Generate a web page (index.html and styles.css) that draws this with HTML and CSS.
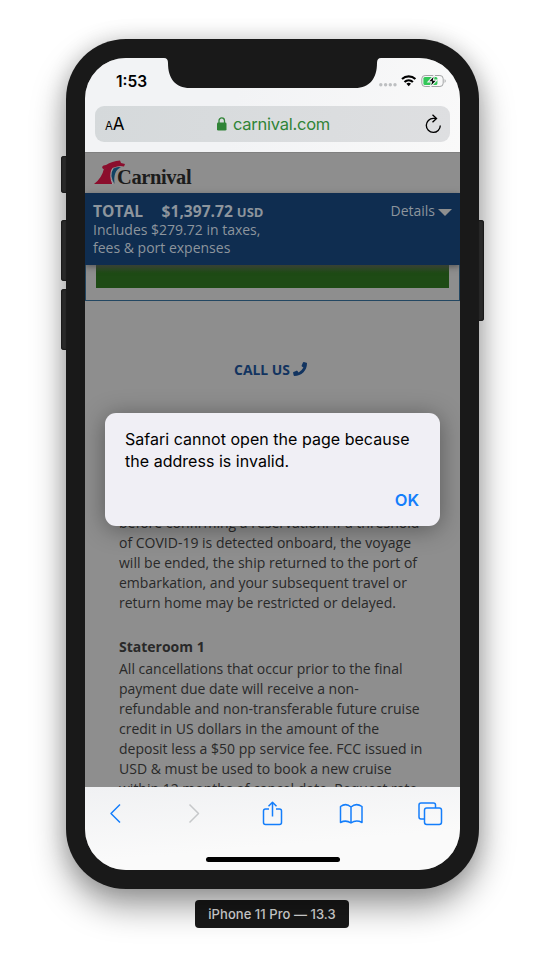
FILE: index.html
```html
<!DOCTYPE html>
<html lang="en">
<head>
<meta charset="utf-8">
<title>iPhone 11 Pro</title>
<link rel="stylesheet" href="styles.css">
</head>
<body>
<main class="stage">
  <div class="phone">
    <i class="side-button mute"></i>
    <i class="side-button volume-up"></i>
    <i class="side-button volume-down"></i>
    <i class="side-button power"></i>
    <div class="screen">
      <svg class="notch" width="217" height="31" viewBox="0 0 217 31"><path d="M0 0H217Q213 0 213 5C213 20 206 30 191 30H26C11 30 4 20 4 5Q4 0 0 0Z" fill="#191919"/></svg>
      <header class="browser-top">
        <div class="status">
          <span class="time">1:53</span>
          <svg class="status-icons" width="68" height="16" viewBox="0 0 68 16">
            <g fill="#bdbfc1"><circle cx="1.8" cy="11.8" r="1.7"/><circle cx="6.6" cy="11.8" r="1.7"/><circle cx="11.3" cy="11.8" r="1.7"/><circle cx="16" cy="11.8" r="1.7"/></g>
            <g fill="none" stroke="#000" stroke-width="2.2"><path d="M23 6a10 10 0 0 1 13.4 0"/><path d="M25.5 9a6.2 6.2 0 0 1 8.4 0"/></g>
            <path d="M27.4 10.8a3.5 3.5 0 0 1 4.6 0L29.7 13.3Z"/>
            <rect x="42.8" y="2.5" width="21.4" height="11" rx="3.3" fill="none" stroke="#a2a4a5"/>
            <rect x="44.4" y="4.1" width="14" height="7.8" rx="1.5" fill="#34c759"/>
            <path d="M65.6 6q2.2 2 0 4Z" fill="#a2a4a5"/>
            <path d="M55.5 2 49 8.9H52.5L51.2 14.2 58 7.1H54.4Z" stroke="#f3f4f5" stroke-width="1.1"/>
          </svg>
        </div>
        <div class="address">
          <span class="reader"><small>A</small>A</span>
          <span class="site"><svg width="10" height="14" viewBox="0 0 10 14"><rect y="5.5" width="9.5" height="8" rx="1.3" fill="#308437"/><path d="M2 6V3.7a2.75 2.75 0 0 1 5.5 0V6" fill="none" stroke="#308437" stroke-width="1.3"/></svg><span>carnival.com</span></span>
          <svg class="reload" width="17" height="20" viewBox="0 0 17 20" fill="none" stroke="#000" stroke-width="1.35"><path d="M11 4.4H8.3a7 7 0 1 0 7 7.1"/><path d="M7.5.8 11.5 4.4 7.5 8.2"/></svg>
        </div>
      </header>

      <section class="web-page">
        <div class="brand">
          <svg width="32" height="26" viewBox="0 0 32 26"><path d="M0 24Q8 18 10 8.5L19 7Q15 15 19 24Z" fill="#8b0e2d"/><path d="M8 7Q9 5 12 5Q18 1 26 .5L27 3 31 4 30 6.5Q25 5 20 7.5Q14 8.5 9 9Z" fill="#8b0e2d"/><path d="M18.5 8.5Q15 15 18.7 24" fill="none" stroke="#a0a6aa"/><path d="M19.5 8.5Q24 6 27 7.5Q19 10 20.5 24Q15 15 19.5 8.5Z" fill="#0f4263"/></svg>
          <span class="wordmark">Carnival</span>
        </div>
        <div class="price">
          <div class="sum"><b>TOTAL</b><b class="amount">$1,397.72</b><b class="usd">USD</b></div>
          <div class="tax">Includes $279.72 in taxes,<br>fees &amp; port expenses</div>
          <div class="details">Details<i></i></div>
        </div>
        <div class="booking"><div class="green-button"></div></div>
        <div class="call"><span>CALL US</span><svg width="14" height="14" viewBox="0 0 16 16"><path d="M15.5.8 12.4.1q-.7-.1-1 .5L9.9 4.1q-.2.6.3 1l1.700 1.300a12 12 0 0 1-5.500 5.500l-1.300-1.700q-.4-.5-1-.3L.6 11.400q-.6.3-.5 1l.7 3.100q.2.500.8.500C9.600 16 16 9.600 16 1.600q0-.6-.5-.8Z" fill="#123460"/></svg></div>
        <div class="terms">
          <p>before confirming a reservation. If a threshold<br>of COVID-19 is detected onboard, the voyage<br>will be ended, the ship returned to the port of<br>embarkation, and your subsequent travel or<br>return home may be restricted or delayed.</p>
          <h2>Stateroom 1</h2>
          <p>All cancellations that occur prior to the final<br>payment due date will receive a non-<br>refundable and non-transferable future cruise<br>credit in US dollars in the amount of the<br>deposit less a $50 pp service fee. FCC issued in<br>USD &amp; must be used to book a new cruise<br>within 12 months of cancel date. Request rate</p>
        </div>
      </section>

      <footer class="browser-bottom">
        <nav class="tools">
          <svg width="26" height="26" viewBox="0 0 26 26"><path d="M18 4.500 9 13.500 18 22.500"/></svg>
          <svg class="off" width="26" height="26" viewBox="0 0 26 26"><path d="M8.500 4.500 17.500 13.500 8.500 22.500"/></svg>
          <svg width="26" height="26" viewBox="0 0 26 26"><path d="M9 9H5.500q-2 0-2 2V22.500q0 2 2 2H19.500q2 0 2-2V11q0-2-2-2H16M12.500 16.500V2.500M8.500 6.200 12.500 2.200 16.500 6.200"/></svg>
          <svg width="26" height="26" viewBox="0 0 26 26"><path d="M13 7Q8 2.500 2.500 6.500V22.500Q8 19.500 13 23Q18 19.500 24 22.500V6.500Q18 2.500 13 7V23"/></svg>
          <svg width="26" height="26" viewBox="0 0 26 26"><path d="M7 19H4q-2 0-2-2V5q0-2 2-2H16.500q2 0 2 2V8"/><rect x="7.500" y="8" width="17" height="16.500" rx="2.200"/></svg>
        </nav>
        <div class="home"></div>
      </footer>

      <div class="dialog" role="alertdialog">
        <p>Safari cannot open the page because<br>the address is invalid.</p>
        <strong>OK</strong>
      </div>
    </div>
  </div>
  <div class="device">iPhone 11 Pro — 13.3</div>
</main>
</body>
</html>
```

FILE: styles.css
```css
* { box-sizing: border-box; }
body { margin: 0; background: #fff; font-family: Inter, sans-serif; }
.stage { height: 964px; padding-top: 39px; display: flex; flex-direction: column; align-items: center; overflow: hidden; }
.phone { position: relative; width: 413px; height: 850px; padding: 19px; border-radius: 60px; background: #191919; box-shadow: 0 17px 34px rgba(0,0,0,.4), 0 0 22px rgba(0,0,0,.14); }
.side-button { position: absolute; width: 6px; background: #292929; border-radius: 3px 0 0 3px; box-shadow: inset 0 0 1px 1px #191919; left: -5px; }
.mute { top: 117px; height: 37px; }
.volume-up { top: 181px; height: 61px; }
.volume-down { top: 250px; height: 61px; }
.power { left: auto; right: -5px; top: 181px; height: 101px; border-radius: 0 3px 3px 0; }
.screen { position: relative; width: 375px; height: 812px; border-radius: 41px; overflow: hidden; background: #8e8e8e; display: flex; flex-direction: column; }
.notch { position: absolute; left: 79px; top: 0; }

.browser-top { flex: none; height: 94px; background: linear-gradient(100deg, #f2f3f5 40%, #f9f9f9); display: flex; flex-direction: column; }
.status { height: 48px; padding: 0 14px 2px 31px; display: flex; align-items: center; justify-content: space-between; }
.time { font-size: 15.5px; font-weight: 600; }
.status-icons { margin-right: -1px; }
.address { height: 36px; margin: 0 10px; padding: 0 8px 0 10px; border-radius: 9px; background: linear-gradient(100deg, #d5d9db, #dedfe1); display: flex; align-items: center; justify-content: space-between; }
.reader { width: 42px; font-size: 17px; letter-spacing: -.2px; }
.reader small { font-size: 11.5px; }
.site { display: flex; align-items: center; gap: 7px; color: #308437; font-size: 16.5px; letter-spacing: -.25px; }
.site span { margin-left: -1px; }
.reload { margin-left: 25px; }

.web-page { flex: 1; min-height: 0; overflow: hidden; border-top: 1px solid #808080; font-family: "Open Sans", sans-serif; color: #292929; }
.brand { height: 40px; padding: 7px 0 0 9px; display: flex; }
.wordmark { margin: 6px 0 0 -9px; font: bold 20.5px/22px "Liberation Serif", serif; color: #1c1c1c; letter-spacing: -.4px; }
.price { position: relative; z-index: 1; height: 72px; padding: 8px 8px 0; background: #0f2d50; color: #8d959d; display: grid; grid-template-columns: 1fr auto; grid-template-rows: 20px 36px; box-shadow: 0 2px 6px rgba(60,60,60,.65); }
.sum { display: flex; align-items: baseline; font-size: 15.6px; line-height: 20px; }
.amount { margin-left: 18.5px; }
.usd { margin-left: 4px; font-size: 13px; }
.tax { grid-row: 2; grid-column: 1; font-size: 14px; line-height: 18px; }
.details { grid-row: 1; grid-column: 2; display: flex; align-items: center; gap: 3px; font-size: 14px; line-height: 20px; }
.details i { border: 7px solid transparent; border-top-color: #8f8f8f; border-bottom: 0; margin-top: 2px; }
.booking { height: 36px; border: 1px solid #234762; border-top: 0; padding: 0 10px; }
.green-button { height: 23px; background: linear-gradient(#34462c, #1e4b15 8px); }
.call { height: 138px; display: flex; align-items: center; justify-content: center; gap: 3px; padding: 0 4px 2px 0; font-size: 13.9px; font-weight: 700; color: #123460; }
.terms { padding: 74px 0 0 34px; font-size: 14px; line-height: 20px; white-space: nowrap; }
.terms p { margin: 0; }
.terms h2 { margin: 24px 0 2px; font-size: 14px; line-height: 20px; }

.browser-bottom { flex: none; height: 83px; background: linear-gradient(175deg, #f0f1f3, #fafafa 65%); display: flex; flex-direction: column; align-items: center; }
.tools { width: 100%; height: 52px; padding: 0 17px; display: flex; align-items: center; justify-content: space-between; }
.tools svg { fill: none; stroke: #147efb; stroke-width: 1.5; stroke-linejoin: round; }
.tools .off { stroke: #c6c8ca; }
.home { width: 134px; height: 5px; margin-top: 18px; border-radius: 3px; background: #000; }

.dialog { position: absolute; left: 20px; top: 355px; width: 335px; height: 113px; padding: 15px 21px 16px 20px; border-radius: 11px; background: #f0eff5; box-shadow: 0 3px 24px rgba(0,0,0,.38); display: flex; flex-direction: column; justify-content: space-between; }
.dialog p { margin: 0; font-size: 16px; line-height: 22px; letter-spacing: .03px; white-space: nowrap; }
.dialog strong { align-self: flex-end; font-size: 16.5px; line-height: 20px; font-weight: 600; color: #147efb; }
.device { flex: none; width: 154px; height: 28px; margin: 11px 1px 0 0; border-radius: 4px; background: #191919; color: #dedede; font-size: 13px; letter-spacing: .05px; line-height: 28px; text-align: center; font-weight: 500; white-space: nowrap; }
```
